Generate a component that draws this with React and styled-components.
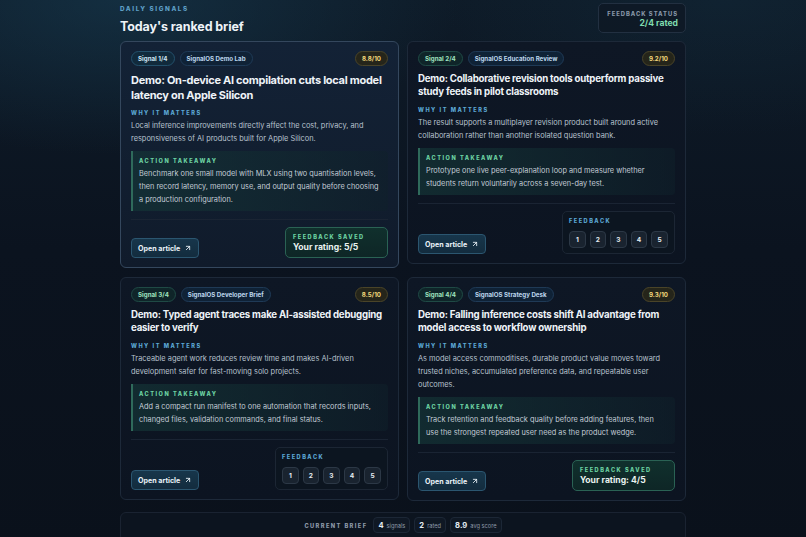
import React from "react";
import styled, { createGlobalStyle, css } from "styled-components";
import { ArrowUpRight } from "lucide-react";

const signals = [
  {
    id: 1,
    source: "SignalOS Demo Lab",
    score: "8.8",
    title: "Demo: On-device AI compilation cuts local model latency on Apple Silicon",
    why: "Local inference improvements directly affect the cost, privacy, and responsiveness of AI products built for Apple Silicon.",
    action:
      "Benchmark one small model with MLX using two quantisation levels, then record latency, memory use, and output quality before choosing a\u00a0production configuration.",
    rating: 5,
    featured: true,
  },
  {
    id: 2,
    source: "SignalOS Education Review",
    score: "9.2",
    title: "Demo: Collaborative revision tools outperform passive study feeds in pilot classrooms",
    why: "The result supports a multiplayer revision product built around active collaboration rather than another isolated question bank.",
    action:
      "Prototype one live peer-explanation loop and measure whether students return voluntarily across a seven-day test.",
    rating: null,
  },
  {
    id: 3,
    source: "SignalOS Developer Brief",
    score: "8.5",
    title: "Demo: Typed agent traces make AI-assisted debugging easier to verify",
    why: "Traceable agent work reduces review time and makes AI-driven development safer for fast-moving solo projects.",
    action:
      "Add a compact run manifest to one automation that records inputs, changed files, validation commands, and final status.",
    rating: null,
  },
  {
    id: 4,
    source: "SignalOS Strategy Desk",
    score: "9.3",
    title: "Demo: Falling inference costs shift AI advantage from model access to workflow ownership",
    why: "As model access commoditises, durable product value moves toward trusted niches, accumulated preference data, and repeatable user outcomes.",
    action:
      "Track retention and feedback quality before adding features, then use\u00a0the strongest repeated user need as the product wedge.",
    rating: 4,
  },
];

export default function App() {
  return (
    <>
      <GlobalStyle />
      <Page>
        <Header>
          <div>
            <Eyebrow>Daily signals</Eyebrow>
            <PageTitle>Today's ranked brief</PageTitle>
          </div>
          <StatusBox>
            <StatusLabel>Feedback status</StatusLabel>
            <StatusValue>2/4 rated</StatusValue>
          </StatusBox>
        </Header>

        <Grid>
          {signals.map((s) => (
            <SignalCard key={s.id} signal={s} />
          ))}
        </Grid>

        <SummaryBar>
          <SummaryLabel>Current brief</SummaryLabel>
          <Stat><b>4</b> signals</Stat>
          <Stat><b>2</b> rated</Stat>
          <Stat><b>8.9</b> avg score</Stat>
        </SummaryBar>
      </Page>
    </>
  );
}

function SignalCard({ signal }) {
  const { id, source, score, title, why, action, rating, featured } = signal;
  return (
    <Card $featured={featured}>
      <BadgeRow>
        <Badge $tone={featured ? "blue" : "green"}>Signal {id}/4</Badge>
        <Badge $tone="source">{source}</Badge>
        <ScoreBadge>{score}/10</ScoreBadge>
      </BadgeRow>
      <Title $featured={featured}>{title}</Title>
      <WhyLabel $featured={featured}>Why it matters</WhyLabel>
      <Body>{why}</Body>
      <Takeaway>
        <SectionLabel $green>Action takeaway</SectionLabel>
        <TakeawayText>{action}</TakeawayText>
      </Takeaway>
      <CardFooter>
        <OpenButton>
          Open article <ArrowUpRight size={8} strokeWidth={2.6} />
        </OpenButton>
        {rating ? (
          <Saved>
            <SectionLabel $green>Feedback saved</SectionLabel>
            <SavedText>Your rating: {rating}/5</SavedText>
          </Saved>
        ) : (
          <FeedbackBox>
            <SectionLabel>Feedback</SectionLabel>
            <RateRow>
              {[1, 2, 3, 4, 5].map((n) => (
                <RateButton key={n}>{n}</RateButton>
              ))}
            </RateRow>
          </FeedbackBox>
        )}
      </CardFooter>
    </Card>
  );
}

const GlobalStyle = createGlobalStyle`
  * { box-sizing: border-box; }
  html, body {
    margin: 0;
    min-height: 100%;
    background: #0b121d;
  }
  body {
    font-family: Inter, "Noto Sans", sans-serif;
    color: #e6edf4;
    -webkit-font-smoothing: antialiased;
  }
`;

const Page = styled.div`
  min-height: 100vh;
  padding: 3px 0 12px;
  background:
    radial-gradient(ellipse 60% 40% at 15% 0%, rgba(24, 62, 84, 0.55), transparent 70%),
    radial-gradient(ellipse 50% 35% at 90% 0%, rgba(20, 48, 66, 0.35), transparent 70%),
    linear-gradient(180deg, #0e1b28 0%, #0b131f 45%, #0a111b 100%);
`;

const Header = styled.header`
  width: 566px;
  margin: 0 auto 7px;
  display: flex;
  justify-content: space-between;
  align-items: flex-end;
`;

const Eyebrow = styled.div`
  font-size: 6.3px;
  line-height: 9px;
  font-weight: 800;
  letter-spacing: 1.6px;
  text-transform: uppercase;
  color: #5e9fc6;
`;

const PageTitle = styled.h1`
  margin: 5px 0 0;
  font-size: 12.5px;
  line-height: 15px;
  font-weight: 700;
  color: #eef3f8;
  letter-spacing: -0.1px;
`;

const StatusBox = styled.div`
  width: 88px;
  height: 30px;
  margin-bottom: 1px;
  padding: 5px 7px 0;
  border: 1px solid #223041;
  border-radius: 5px;
  background: rgba(14, 24, 36, 0.8);
  text-align: right;
`;

const StatusLabel = styled.div`
  font-size: 5.8px;
  line-height: 9px;
  font-weight: 800;
  letter-spacing: 1px;
  text-transform: uppercase;
  white-space: nowrap;
  color: #8795a6;
`;

const StatusValue = styled.div`
  font-size: 8.6px;
  line-height: 11px;
  font-weight: 700;
  color: #7fdcae;
`;

const Grid = styled.div`
  width: 566px;
  margin: 0 auto;
  display: grid;
  grid-template-columns: 1fr 1fr;
  column-gap: 8px;
  row-gap: 9px;
  align-items: start;
`;

const Card = styled.article`
  display: flex;
  flex-direction: column;
  padding: 9px 10px 9px;
  border: 1px solid #1d2939;
  border-radius: 6px;
  background: linear-gradient(180deg, #0e1725 0%, #0c1421 100%);
  ${(p) =>
    p.$featured &&
    css`
      border-color: #34475d;
      background: linear-gradient(180deg, #132236 0%, #101b2b 100%);
    `}
`;

const BadgeRow = styled.div`
  display: flex;
  align-items: center;
  gap: 5px;
  height: 15px;
`;

const tones = {
  blue: css`
    color: #cfe5f3;
    background: #112a3c;
    border-color: #23506b;
  `,
  green: css`
    color: #9fe2bf;
    background: #0f2529;
    border-color: #1f4a45;
  `,
  source: css`
    color: #bdd6ec;
    background: #0f2236;
    border-color: #1f3a56;
  `,
};

const Badge = styled.span`
  display: inline-flex;
  align-items: center;
  height: 15px;
  padding: 0 6px;
  border: 1px solid;
  border-radius: 999px;
  font-size: 6.2px;
  font-weight: 700;
  white-space: nowrap;
  ${(p) => tones[p.$tone]}
`;

const ScoreBadge = styled(Badge)`
  margin-left: auto;
  color: #f1d77c;
  background: #25251a;
  border-color: #4a4428;
`;

const Title = styled.h2`
  margin: 7px 0 0;
  font-size: ${(p) => (p.$featured ? "11px" : "9.7px")};
  line-height: ${(p) => (p.$featured ? "15px" : "12.5px")};
  letter-spacing: ${(p) => (p.$featured ? "-0.28px" : "-0.22px")};
  font-weight: 700;
  color: #eef3f8;
`;

const SectionLabel = styled.div`
  font-size: 5.6px;
  line-height: 8px;
  font-weight: 800;
  letter-spacing: 1.5px;
  text-transform: uppercase;
  white-space: nowrap;
  color: ${(p) => (p.$green ? "#6dd3a3" : "#5ca8d4")};
`;

const WhyLabel = styled(SectionLabel)`
  margin-top: ${(p) => (p.$featured ? "6px" : "8px")};
`;

const Body = styled.p`
  margin: 2px 0 0;
  font-size: 7.4px;
  line-height: 13px;
  color: #b8c2ce;
`;

const Takeaway = styled.div`
  margin-top: 6px;
  padding: 6px 5px 5px 6px;
  border-left: 2px solid #2f6a5b;
  border-radius: 0 4px 4px 0;
  background: linear-gradient(90deg, rgba(20, 52, 54, 0.7) 0%, rgba(15, 32, 42, 0.55) 100%);
  ${SectionLabel} {
    margin-bottom: 2px;
  }
`;

const TakeawayText = styled.p`
  margin: 0;
  font-size: 7.35px;
  line-height: 13px;
  color: #c3ccd6;
`;

const CardFooter = styled.div`
  margin-top: 8px;
  padding-top: 7px;
  border-top: 1px solid #1a2433;
  display: flex;
  justify-content: space-between;
  align-items: flex-end;
`;

const OpenButton = styled.button`
  display: inline-flex;
  align-items: center;
  gap: 4px;
  height: 20px;
  padding: 0 6px;
  border: 1px solid #2b5670;
  border-radius: 4px;
  background: linear-gradient(180deg, #17364b 0%, #132c3e 100%);
  color: #eaf2f8;
  font-family: inherit;
  font-size: 7.1px;
  font-weight: 700;
`;

const Saved = styled.div`
  width: 103px;
  height: 31px;
  padding: 5px 7px 0;
  border: 1px solid #2a6254;
  border-radius: 5px;
  background: linear-gradient(180deg, #10302d 0%, #0e2626 100%);
`;

const SavedText = styled.div`
  margin-top: 1px;
  font-size: 8.6px;
  line-height: 11px;
  font-weight: 700;
  color: #e9f2ef;
`;

const FeedbackBox = styled.div`
  width: 113px;
  padding: 5px 6px 5px;
  border: 1px solid #1c2634;
  border-radius: 5px;
  background: #0c1520;
`;

const RateRow = styled.div`
  margin-top: 6px;
  display: flex;
  gap: 4px;
`;

const RateButton = styled.button`
  width: 17px;
  height: 17px;
  padding: 0;
  border: 1px solid #2c3846;
  border-radius: 4px;
  background: #19232f;
  color: #e6ebf0;
  font-family: inherit;
  font-size: 6.6px;
  font-weight: 700;
`;

const SummaryBar = styled.footer`
  width: 566px;
  margin: 11px auto 0;
  padding: 4px 0 8px;
  border: 1px solid #1a2331;
  border-radius: 6px;
  background: rgba(13, 21, 32, 0.8);
  display: flex;
  justify-content: center;
  align-items: center;
  gap: 4px;
`;

const SummaryLabel = styled.span`
  margin-right: 2px;
  font-size: 5.7px;
  font-weight: 800;
  letter-spacing: 1.4px;
  text-transform: uppercase;
  color: #8c98a8;
`;

const Stat = styled.span`
  display: inline-flex;
  align-items: center;
  gap: 3px;
  height: 16px;
  padding: 0 4px;
  border: 1px solid #1c2736;
  border-radius: 4px;
  background: #0f1824;
  font-size: 5.7px;
  color: #8d99a8;
  b {
    font-size: 7.6px;
    font-weight: 700;
    color: #e6edf4;
  }
`;
